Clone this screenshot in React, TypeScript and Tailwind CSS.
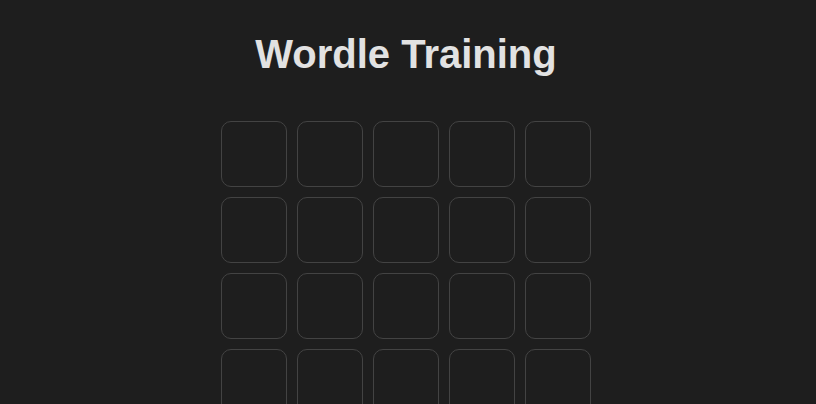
export default function App() {
    const rows = [0, 1, 2, 3, 4, 5]
    const cols = [0, 1, 2, 3, 4]

    return (
        <div className="min-h-screen bg-[#1e1e1e] flex flex-col items-center font-['Liberation_Sans',Arial,sans-serif] pr-[4px]">
            <h1 className="mt-[30px] text-[40px] leading-[48px] font-bold text-[#e2e2e2]">Wordle Training</h1>

            {/* Board */}
            <div className="mt-[43px] flex flex-col gap-[10px]">
                {rows.map((r) => (
                    <div key={r} className="flex gap-[10px]">
                        {cols.map((c) => (
                            <div key={c} className="w-[66px] h-[66px] rounded-[10px] border border-[#434343] bg-[#1e1e1e]"></div>
                        ))}
                    </div>
                ))}
            </div>
        </div>
    )
}
